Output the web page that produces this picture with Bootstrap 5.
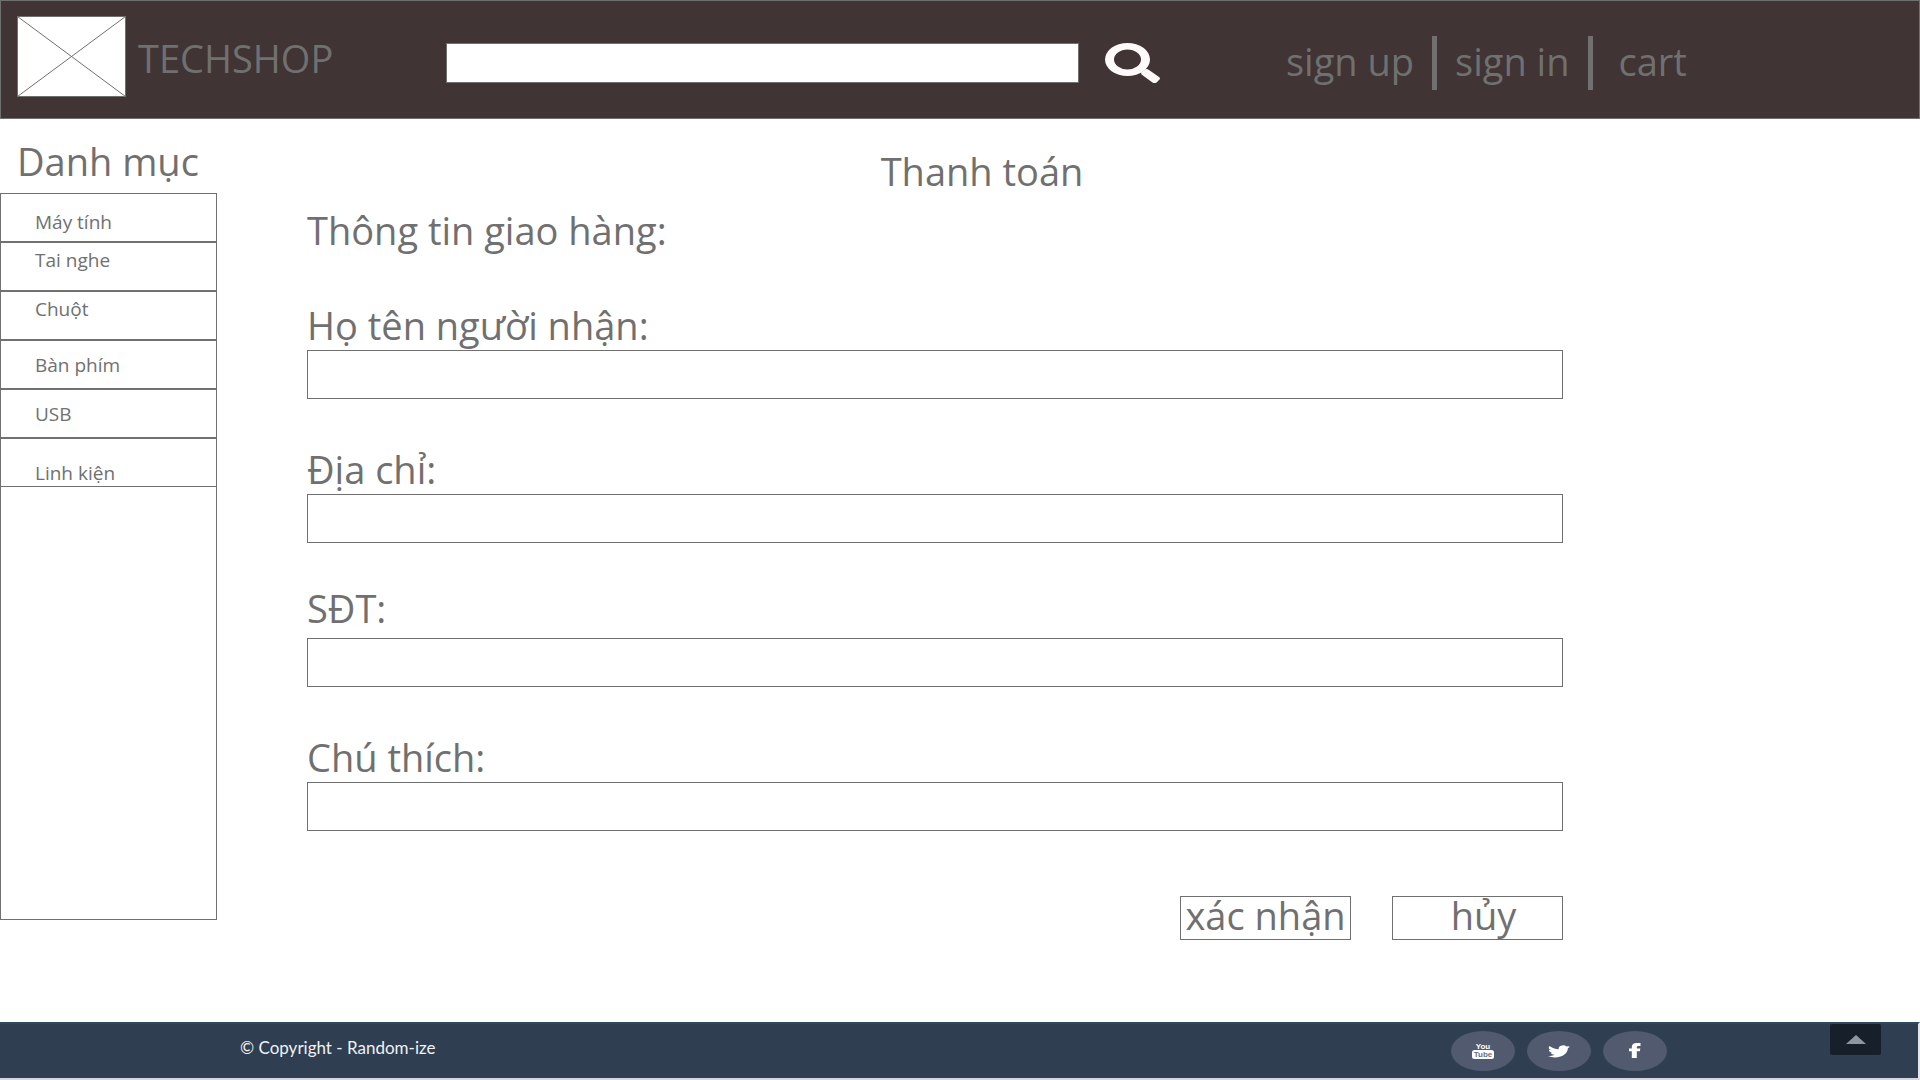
<!DOCTYPE html>
<html lang="vi">
<head>
<meta charset="utf-8">
<meta name="viewport" content="width=device-width, initial-scale=1">
<title>TechShop - Thanh toán</title>
<link href="https://cdn.jsdelivr.net/npm/bootstrap@5.3.0/dist/css/bootstrap.min.css" rel="stylesheet">
<style>
:root { --ink: #707070; }
body { font-family: "Open Sans", "Noto Sans", sans-serif; color: var(--ink); background: #fff; font-size: 19px; line-height: 28px; }
a { color: inherit; text-decoration: none; }
.big-text { font-size: 38px; line-height: 52px; font-weight: 400; }
.site-header { background: #403434; border: 1px solid var(--ink); height: 119px; padding-left: 16px; }
.logo-box { width: 109px; height: 81px; display: block; }
.brand-link { gap: 12px; width: 429px; padding-top: 15px; }
.brand-link span { padding-top: 16px; }
.search-area { gap: 26px; padding-top: 42px; }
.search-box { width: 633px; height: 40px; border: 1px solid var(--ink); border-radius: 0; background: #fff; }
.search-btn { border: 0; background: none; padding: 0; width: 55px; height: 40px; }
.search-btn svg { display: block; }
.user-nav { margin-left: 126px; padding-top: 35px; gap: 18px; font-size: 38px; line-height: 50px; }
.nav-line { width: 5px; height: 54px; background: var(--ink); }
.side-col { width: 217px; flex: none; }
.side-title { padding: 16px 0 6px 17px; margin: 0; }
.side-box { border: 1px solid var(--ink); height: 727px; }
.cat-link { display: flex; height: 49px; padding-left: 34px; border-bottom: 2px solid var(--ink); align-items: center; }
.cat-list li:last-child .cat-link { border-bottom-width: 1px; height: 48px; }
.cat-low { padding-top: 8px; }
.cat-high { padding-bottom: 14px; }
.cat-bottom { padding-top: 20px; }
.pay-form { width: 100%; max-width: 1256px; margin-left: 90px; }
.pay-title { margin: 26px 0 7px; padding-left: 94px; text-align: center; }
.pay-sub { margin: 0 0 45px; }
.field { margin-bottom: 46px; }
.field label { display: block; line-height: 49px; }
.field .label-raised { margin-top: -5px; padding-bottom: 5px; }
.field input { display: block; width: 100%; height: 49px; border: 1px solid var(--ink); border-radius: 0; }
.actions { gap: 41px; margin-top: 65px; }
.box-btn { width: 171px; height: 44px; padding: 0 0 6px; border: 1px solid var(--ink); border-radius: 0; background: #fff; color: var(--ink); line-height: 36px; }
.cancel-btn { padding-left: 12px; }
.site-footer { height: 58px; background: #2f3e50; border-top: 2px solid #30485f; border-bottom: 2px solid #d5d5dc; border-right: 2px solid #e6e6ea; padding-left: 240px; padding-right: 37px; font-family: Lato, sans-serif; color: #eef2f5; }
.copy-text { font-size: 17px; line-height: 20px; padding-top: 14px; }
.social-links { gap: 12px; padding-top: 7px; }
.social-links svg { display: block; }
.yt-text { font: bold 8px "Liberation Sans", sans-serif; }
.top-btn { width: 51px; height: 31px; background: #17202a; border: 0; border-radius: 2px; padding: 0; margin-left: 163px; }
.top-btn svg { display: block; margin: 0 auto; }
</style>
<script src="https://cdn.jsdelivr.net/npm/bootstrap@5.3.0/dist/js/bootstrap.bundle.min.js" defer></script>
</head>
<body class="d-flex flex-column min-vh-100">
<header class="site-header d-flex align-items-start">
  <a class="brand-link d-flex align-items-start" href="#">
    <svg class="logo-box" viewBox="0 0 109 81" aria-hidden="true"><rect x=".5" y=".5" width="108" height="80" fill="#fff" stroke="#707070"/><path d="M.5.5l108 80M108.5.5l-108 80" stroke="#707070"/></svg>
    <span class="big-text">TECHSHOP</span>
  </a>
  <form class="search-area d-flex" role="search">
    <input class="search-box" type="search" aria-label="Tìm kiếm">
    <button class="search-btn" type="button" aria-label="Tìm">
      <svg width="55" height="40" viewBox="0 0 55 40" fill="#fffafa"><path fill-rule="evenodd" d="M22.500 0A22.500 16.500 0 1 1 22.500 33A22.500 16.500 0 1 1 22.500 0zM22.500 6.500A13.500 10 0 1 0 22.500 26.500A13.500 10 0 1 0 22.500 6.500z"/><path d="M36 29.500l5-3.500q2 0 3 1l10 7q2 1.500 0 3l-2.500 2.500q-2 1-4 0L36.500 31.500z"/></svg>
    </button>
  </form>
  <nav class="user-nav d-flex align-items-start" aria-label="Tài khoản">
    <a href="#">sign up</a><span class="nav-line"></span><a href="#">sign in</a><span class="nav-line"></span><a href="#" class="ps-2">cart</a>
  </nav>
</header>
<div class="d-flex flex-grow-1">
  <aside class="side-col">
    <h2 class="side-title big-text">Danh mục</h2>
    <nav class="side-box" aria-label="Danh mục">
      <ul class="cat-list list-unstyled m-0">
        <li><a class="cat-link cat-low" href="#">Máy tính</a></li>
        <li><a class="cat-link cat-high" href="#">Tai nghe</a></li>
        <li><a class="cat-link cat-high" href="#">Chuột</a></li>
        <li><a class="cat-link" href="#">Bàn phím</a></li>
        <li><a class="cat-link" href="#">USB</a></li>
        <li><a class="cat-link cat-bottom" href="#">Linh kiện</a></li>
      </ul>
    </nav>
  </aside>
  <main class="flex-grow-1">
    <form class="pay-form">
      <h1 class="pay-title big-text">Thanh toán</h1>
      <h2 class="pay-sub big-text">Thông tin giao hàng:</h2>
      <div class="field"><label class="big-text" for="f-name">Họ tên người nhận:</label><input id="f-name" type="text"></div>
      <div class="field"><label class="big-text" for="f-addr">Địa chỉ:</label><input id="f-addr" type="text"></div>
      <div class="field"><label class="big-text label-raised" for="f-tel">SĐT:</label><input id="f-tel" type="tel"></div>
      <div class="field"><label class="big-text" for="f-note">Chú thích:</label><input id="f-note" type="text"></div>
      <div class="actions d-flex justify-content-end">
        <button class="box-btn big-text" type="button">xác nhận</button>
        <button class="box-btn cancel-btn big-text" type="button">hủy</button>
      </div>
    </form>
  </main>
</div>
<footer class="site-footer d-flex justify-content-between align-items-start">
  <div class="copy-text">© Copyright - Random-ize</div>
  <div class="d-flex align-items-start">
    <div class="social-links d-flex">
      <a href="#" aria-label="YouTube"><svg width="64" height="40"><ellipse cx="32" cy="20" rx="32" ry="20" fill="#525a70"/><text class="yt-text" x="32" y="18" text-anchor="middle" fill="#fff">You</text><rect x="21" y="19" width="22" height="9" rx="2.500" fill="#fff"/><text class="yt-text" x="32" y="26" text-anchor="middle" fill="#687086">Tube</text></svg></a>
      <a href="#" aria-label="Twitter"><svg width="64" height="40"><ellipse cx="32" cy="20" rx="32" ry="20" fill="#525a70"/><path transform="translate(21 12.600) scale(1.375 .92)" fill="#fff" d="M5.026 15c6.038 0 9.341-5.003 9.341-9.334 0-.14 0-.282-.006-.422A6.685 6.685 0 0 0 16 3.542a6.658 6.658 0 0 1-1.889.518 3.301 3.301 0 0 0 1.447-1.817 6.533 6.533 0 0 1-2.087.793A3.286 3.286 0 0 0 7.875 6.030a9.325 9.325 0 0 1-6.767-3.429 3.289 3.289 0 0 0 1.018 4.382A3.323 3.323 0 0 1 .64 6.575v.045a3.288 3.288 0 0 0 2.632 3.218 3.203 3.203 0 0 1-.865.115 3.230 3.230 0 0 1-.614-.057 3.283 3.283 0 0 0 3.067 2.277A6.588 6.588 0 0 1 .78 13.580a6.320 6.320 0 0 1-.78-.045A9.344 9.344 0 0 0 5.026 15z"/></svg></a>
      <a href="#" aria-label="Facebook"><svg width="64" height="40"><ellipse cx="32" cy="20" rx="32" ry="20" fill="#525a70"/><path fill="#fff" d="M37.500 12v3h-2.200q-1.500 0-1.500 1.200V17.500h3.500l-.4 2.800h-3.100V27h-5v-6.700H26v-2.800h2.800V15.800q0-3.800 5-3.800z"/></svg></a>
    </div>
    <button class="top-btn" type="button" aria-label="Lên đầu trang"><svg width="20" height="9"><path d="M0 9L10 0l10 9z" fill="#9096a0"/></svg></button>
  </div>
</footer>
</body>
</html>
